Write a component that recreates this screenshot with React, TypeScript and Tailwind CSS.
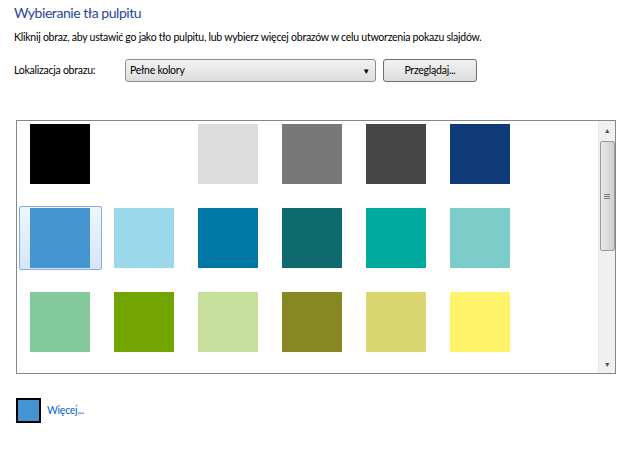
const ROWS = [
  ['#000000', '#ffffff', '#dcdcdc', '#787878', '#464646', '#0e3b78'],
  ['#4494d2', '#9bd9ea', '#0077a4', '#0e6a6c', '#00a99d', '#7ccdc9'],
  ['#84c99c', '#72a500', '#c6df9c', '#878823', '#dbd770', '#fff36a'],
]

function Scrollbar() {
  return (
    <div className="w-[17px] h-full bg-[#f0f0f0] border-l border-[#e6e6e6] flex flex-col items-center">
      <div className="h-[18px] flex items-center justify-center text-[7px] text-[#555]">▲</div>
      <div className="w-[15px] h-[110px] mt-[2px] rounded-[2px] border border-[#9a9a9a] bg-gradient-to-r from-[#e8e8e8] via-[#dcdcdc] to-[#cfcfcf] flex items-center justify-center">
        <div className="flex flex-col gap-px">
          <div className="w-[6px] h-px bg-[#777]" />
          <div className="w-[6px] h-px bg-[#777]" />
          <div className="w-[6px] h-px bg-[#777]" />
        </div>
      </div>
      <div className="flex-1" />
      <div className="h-[18px] flex items-center justify-center text-[7px] text-[#555]">▼</div>
    </div>
  )
}

export default function App() {
  return (
    <div className="w-[633px] h-[451px] bg-white font-['Lato',sans-serif] text-[10.5px] tracking-[-0.25px] text-black">
      <div className="pl-[14px] pt-[2px]">
        <h1 className="text-[14px] tracking-[-0.45px] text-[#2a3f9e] leading-[22px]">Wybieranie tła pulpitu</h1>
        <p className="mt-[5px] leading-[16px]">
          Kliknij obraz, aby ustawić go jako tło pulpitu, lub wybierz więcej obrazów w celu utworzenia pokazu slajdów.
        </p>
        <div className="mt-[14px] flex items-center">
          <span className="w-[111px]">Lokalizacja obrazu:</span>
          <div className="w-[251px] h-[23px] rounded-[3px] border border-[#8e8f8f] bg-gradient-to-b from-[#f2f2f2] to-[#dedede] flex items-center pl-[4px] pr-[5px]">
            <span className="flex-1">Pełne kolory</span>
            <span className="text-[8px]">▼</span>
          </div>
          <button className="ml-[7px] w-[94px] h-[23px] rounded-[3px] border border-[#707070] bg-gradient-to-b from-[#f2f2f2] to-[#dddddd] text-center">
            Przeglądaj...
          </button>
        </div>
      </div>

      <div className="ml-[16px] mt-[38px] w-[600px] h-[254px] border border-[#828790] flex">
        <div className="flex-1 pl-[13px] pt-[3px] flex flex-col gap-[24px] overflow-hidden">
          {ROWS.map((row, r) => (
            <div key={r} className="flex gap-[24px]">
              {row.map((c, i) => (
                <div key={i} className="relative w-[60px] h-[60px]">
                  {r === 1 && i === 0 && (
                    <div className="absolute -left-[11px] -top-[2px] w-[83px] h-[64px] rounded-[2px] border border-[#84acdd] bg-gradient-to-b from-[#eef5fd] to-[#d5e6fb]" />
                  )}
                  <div className="relative w-[60px] h-[60px]" style={{ backgroundColor: c }} />
                </div>
              ))}
            </div>
          ))}
        </div>
        <Scrollbar />
      </div>

      <div className="ml-[16px] mt-[24px] flex items-center gap-[6px]">
        <div className="w-[25px] h-[25px] border-2 border-black bg-[#4494d2]" />
        <a className="text-[#0066cc]">Więcej...</a>
      </div>
    </div>
  )
}
